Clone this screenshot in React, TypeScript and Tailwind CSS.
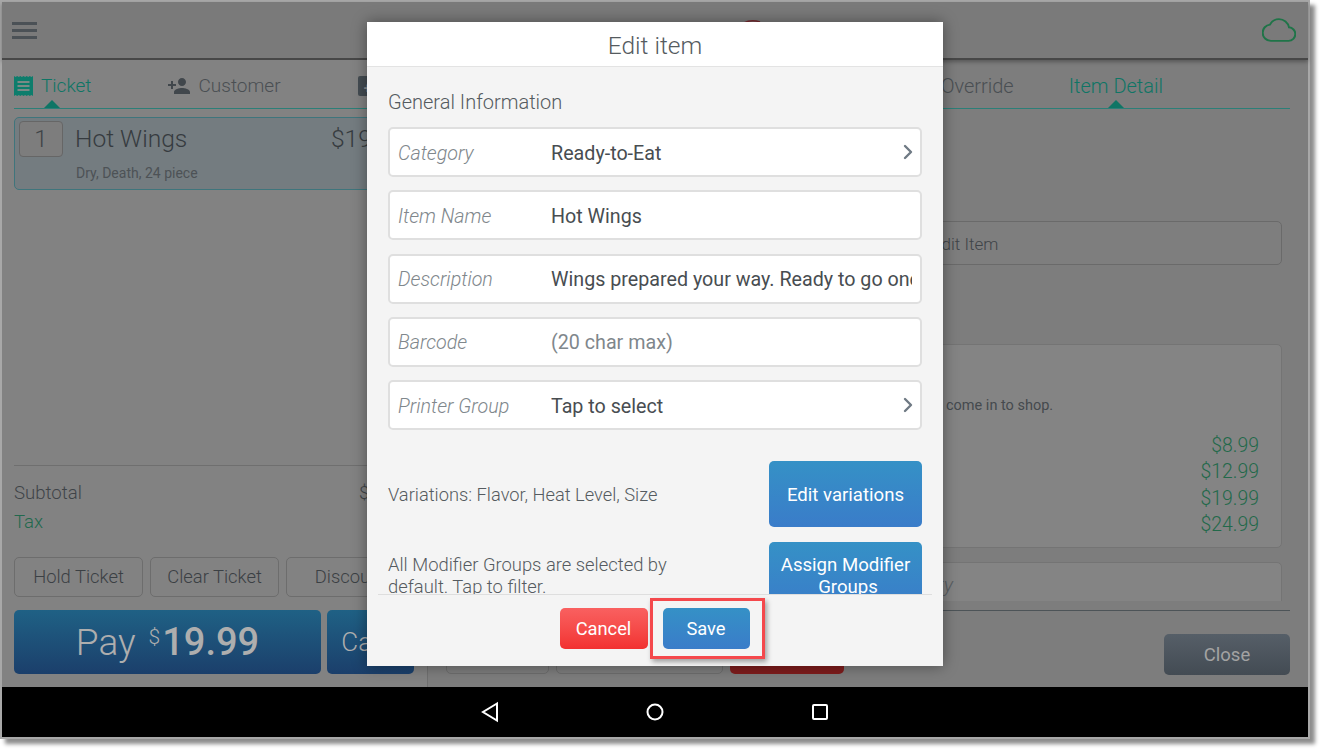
import { ChevronRight } from 'lucide-react';
import { MdPersonAdd } from 'react-icons/md';

const fields = [
    { label: 'Category', value: 'Ready-to-Eat', arrow: true },
    { label: 'Item Name', value: 'Hot Wings' },
    { label: 'Description', value: 'Wings prepared your way. Ready to go one hour before you come in to shop.' },
    { label: 'Barcode', value: '(20 char max)', muted: true },
    { label: 'Printer Group', value: 'Tap to select', arrow: true },
];

const prices = ['$8.99', '$12.99', '$19.99', '$24.99'];

function Caret({ className }: { className: string }) {
    return (
        <svg className={`absolute bottom-0 ${className}`} width="16" height="8" viewBox="0 0 16 8">
            <path d="M0 8 L8 0 L16 8 Z" fill="#0f7565" />
        </svg>
    );
}

function TicketIcon() {
    return (
        <svg width="19" height="20" viewBox="0 0 19 20" className="shrink-0">
            <path
                d="M0 0l1.6 1L3.2 0l1.6 1L6.3 0l1.6 1L9.5 0l1.6 1 1.6-1 1.5 1 1.6-1 1.6 1L19 0v20l-1.6-1-1.6 1-1.6-1-1.5 1-1.6-1-1.6 1-1.6-1-1.6 1-1.5-1-1.6 1-1.6-1L0 20z"
                fill="#0d7d6c"
            />
            <path d="M3.5 5h12v2h-12zM3.5 9h12v2h-12zM3.5 13h12v2h-12z" fill="#7a8a86" />
        </svg>
    );
}

function EditItemModal() {
    return (
        <div className="absolute left-[365px] top-[20px] z-10 flex h-[644px] w-[576px] flex-col bg-[#f4f4f4] shadow-[0_0_14px_rgba(0,0,0,0.4)]">
            <div className="flex h-[45px] shrink-0 items-center justify-center border-b border-[#e3e3e3] bg-white pt-[5px] text-[24.5px] font-light text-[#555b60]">
                Edit item
            </div>
            <div className="mx-[11px] h-[528px] shrink-0 overflow-hidden border-b border-[#dedede] px-[10px]">
                <div className="mt-[23px] text-[20px] leading-[24px] font-light text-[#555b60]">General Information</div>
                <div className="mt-[13px] flex flex-col gap-[13.25px]">
                    {fields.map(f => (
                        <div key={f.label} className={`flex h-[50px] items-center rounded-[5px] border-2 border-[#dfdfdf] bg-white pl-[8px] text-[19.7px] ${f.arrow ? 'pr-0' : 'pr-[8px]'}`}>
                            <span className="mt-[3px] w-[153px] shrink-0 font-light text-[#80878c] italic">{f.label}</span>
                            <span className={`mt-[3px] flex-1 overflow-hidden whitespace-nowrap ${f.muted ? 'text-[#7f878c]' : 'text-[#484d51]'}`}>{f.value}</span>
                            {f.arrow && <ChevronRight className="shrink-0 text-[#6f7a84]" size={24} strokeWidth={2.4} />}
                        </div>
                    ))}
                </div>
                <div className="mt-[31px] flex items-center justify-between">
                    <span className="pt-[2px] text-[18.3px] font-light text-[#555b60]">Variations: Flavor, Heat Level, Size</span>
                    <button className="h-[66px] w-[153px] rounded-[5px] bg-gradient-to-b from-[#3591c6] to-[#3a7cc9] pt-[3px] text-[18.6px] text-white">
                        Edit variations
                    </button>
                </div>
                <div className="mt-[15px] flex items-start justify-between">
                    <span className="mt-[12px] w-[300px] text-[18.4px] leading-[22px] font-light text-[#555b60]">
                        All Modifier Groups are selected by default. Tap to filter.
                    </span>
                    <button className="h-[66px] w-[153px] rounded-[5px] bg-gradient-to-b from-[#3591c6] to-[#3a7cc9] pt-[2px] text-[18.6px] leading-[22px] text-white">
                        Assign Modifier<br /><span className="pl-[5px]">Groups</span>
                    </button>
                </div>
            </div>
            <div className="relative flex flex-1 justify-center gap-[15px] pt-[13px] pr-[1px]">
                <button className="h-[41px] w-[88px] rounded-[5px] bg-gradient-to-b from-[#f96060] to-[#f23030] text-[18.3px] text-white">Cancel</button>
                <button className="h-[41px] w-[87px] rounded-[5px] bg-gradient-to-b from-[#3591c6] to-[#3a7cc9] text-[18.3px] text-white">Save</button>
                {/* annotation box round the Save button */}
                <div className="absolute top-[3px] left-[283px] h-[61px] w-[115px] border-[3px] border-[#f4484c] shadow-[2px_3px_5px_rgba(0,0,0,0.35)]" />
            </div>
        </div>
    );
}

export default function App() {
    return (
        <div className="h-[753px] w-[1325px] overflow-hidden bg-white font-['Roboto',sans-serif]">
            <div className="h-[739px] w-[1310px] border-2 border-[#a8a8a8] shadow-[5px_5px_4px_rgba(0,0,0,0.45)]">
                <div className="relative flex h-[735px] w-[1306px] flex-col bg-[#7d7d7d]">
                    {/* top bar */}
                    <div className="flex h-[58px] shrink-0 items-center justify-between border-b-2 border-[#474747] bg-[#7a7a7a] pr-[12px] pl-[10px] shadow-[0_2px_4px_rgba(0,0,0,0.3)]">
                        <div className="flex flex-col gap-[4px]">
                            <div className="h-[3px] w-[25px] bg-[#4b5156]" />
                            <div className="h-[3px] w-[25px] bg-[#4b5156]" />
                            <div className="h-[3px] w-[25px] bg-[#4b5156]" />
                        </div>
                        <svg width="34" height="24" viewBox="-0.5 3.4 25 17.2" fill="none" stroke="#1f7448" strokeWidth="1.45">
                            <path d="M19.35 10.04C18.67 6.59 15.64 4 12 4 9.11 4 6.6 5.64 5.35 8.04 2.34 8.36 0 10.91 0 14c0 3.31 2.69 6 6 6h13c2.76 0 5-2.24 5-5 0-2.64-2.05-4.78-4.65-4.96z" />
                        </svg>
                    </div>

                    <div className="flex min-h-0 flex-1">
                        {/* ticket column */}
                        <div className="flex w-[426px] shrink-0 flex-col border-r border-[#6f6f6f] bg-[#828282] pr-[12px] pl-[12px]">
                            <div className="relative flex h-[49px] shrink-0 items-center border-b border-[#2c7f78] pt-[3px] text-[19px] font-light">
                                <TicketIcon />
                                <span className="mt-[2px] ml-[8px] text-[#0f7565]">Ticket</span>
                                <MdPersonAdd className="ml-[76px] shrink-0 text-[#41474c]" size={24} />
                                <span className="mt-[2px] ml-[7px] text-[#4a4f53]">Customer</span>
                                <div className="ml-[77px] flex h-[20px] w-[20px] shrink-0 items-end justify-center rounded-[2px] bg-[#444c52] text-[14px] leading-[16px] font-bold text-[#8a8f92]">+</div>
                                <Caret className="left-[30px]" />
                            </div>
                            <div className="mt-[8px] flex h-[73px] shrink-0 items-start rounded-[5px] border border-[#3f757c] bg-[#747c80] pr-[9px] pl-[4px] pt-[3px]">
                                <div className="flex h-[36px] w-[44px] shrink-0 items-center justify-center rounded-[4px] border border-[#666] bg-[#7d7d7d] text-[24px] font-light text-[#3f4448]">1</div>
                                <div className="ml-[12px] flex-1">
                                    <div className="flex justify-between text-[24.6px] leading-[36px] font-light text-[#363b3f]">
                                        <span>Hot Wings</span>
                                        <span>$19.99</span>
                                    </div>
                                    <div className="mt-[7px] ml-[1px] text-[14px] leading-[18px] text-[#4d5256]">Dry, Death, 24 piece</div>
                                </div>
                            </div>
                            <div className="mt-auto border-t border-[#6f6f6f] pb-[13px]">
                                <div className="mt-[15px] flex justify-between text-[18.6px] leading-[24px] font-light text-[#3f4448]">
                                    <span>Subtotal</span>
                                    <span>$19.99</span>
                                </div>
                                <div className="mt-[5px] text-[18.6px] leading-[24px] font-light text-[#22694e]">Tax</div>
                                <div className="mt-[23px] flex gap-[7px]">
                                    {['Hold Ticket', 'Clear Ticket', 'Discount'].map(b => (
                                        <div key={b} className="flex h-[40px] w-[129px] items-center justify-center rounded-[5px] border border-[#6d6d6d] text-[18.4px] font-light text-[#3b4044]">
                                            {b}
                                        </div>
                                    ))}
                                </div>
                                <div className="mt-[13px] flex gap-[6px]">
                                    <div className="flex h-[64px] w-[307px] items-baseline justify-center rounded-[5px] bg-gradient-to-b from-[#1f6185] to-[#1b3f6b] pt-[4px] text-[#aeaeae]">
                                        <span className="text-[37px] font-light">Pay</span>
                                        <span className="mr-[2px] ml-[13px] -translate-y-[11px] text-[21px] font-light">$</span>
                                        <span className="text-[38px] font-medium">19.99</span>
                                    </div>
                                    <div className="flex h-[64px] w-[87px] items-center justify-center rounded-[5px] bg-gradient-to-b from-[#1f6185] to-[#1b3f6b] text-[26px] font-light text-[#aeaeae]">
                                        Cash
                                    </div>
                                </div>
                            </div>
                        </div>

                        {/* item detail column */}
                        <div className="flex min-w-0 flex-1 flex-col pr-[18px] pl-[13px]">
                            <div className="relative flex h-[49px] shrink-0 items-center justify-end border-b border-[#2c7f78] pt-[3px] pr-[127px] text-[20px] font-light">
                                <span className="text-[#4a4f53]">Price Override</span>
                                <span className="ml-[55px] text-[#0f7565]">Item Detail</span>
                                <Caret className="right-[166px]" />
                            </div>
                            <div className="mr-[8px] h-[492px] shrink-0 overflow-hidden">
                                <div className="mt-[112px] flex h-[44px] items-center rounded-[5px] border border-[#6a6a6a] bg-[#7e7e7e] pt-[3px] pl-[490px] text-[17px] font-light text-[#3f4448]">
                                    Edit Item
                                </div>
                                <div className="mt-[79px] h-[204px] rounded-[5px] border border-[#747474] bg-[#848484] pt-[52px] pr-[22px]">
                                    <div className="pl-[124px] text-[14.5px] leading-[18px] whitespace-nowrap text-[#454a4e]">
                                        Wings prepared your way. Ready to go one hour before you come in to shop.
                                    </div>
                                    <div className="mt-[18px] flex flex-col items-end text-[19.4px] leading-[26.4px] font-light text-[#22694a]">
                                        {prices.map(p => <span key={p}>{p}</span>)}
                                    </div>
                                </div>
                                <div className="mt-[14px] h-[60px] rounded-[5px] border border-[#747474] bg-[#848484] pt-[7px] pl-[440px] text-[20px] font-light text-[#5a5f63] italic">
                                    Quantity
                                </div>
                            </div>
                            <div className="mt-[9px] flex flex-1 items-start justify-between border-t border-[#4d5458] pt-[23px]">
                                <div className="flex gap-[7px] pl-[5px]">
                                    <div className="h-[40px] w-[103px] rounded-[5px] border border-[#6d6d6d]" />
                                    <div className="h-[40px] w-[167px] rounded-[5px] border border-[#6d6d6d]" />
                                    <div className="h-[40px] w-[114px] rounded-[5px] bg-[#7f1c1c]" />
                                </div>
                                <div className="flex h-[41px] w-[126px] items-center justify-center rounded-[5px] bg-gradient-to-b from-[#565f68] to-[#434b53] pt-[3px] text-[18.5px] text-[#a3a3a3]">
                                    Close
                                </div>
                            </div>
                        </div>
                    </div>

                    {/* android nav bar */}
                    <div className="flex h-[50px] shrink-0 items-center justify-center gap-[137px] bg-black pr-[1px]">
                        <svg width="28" height="22" viewBox="0 0 28 22" fill="none" stroke="white" strokeWidth="2">
                            <path d="M21 2.5 L7 11 L21 19.5 Z" />
                        </svg>
                        <svg width="28" height="22" viewBox="0 0 28 22" fill="none" stroke="white" strokeWidth="2">
                            <circle cx="14" cy="11" r="7.5" />
                        </svg>
                        <svg width="28" height="22" viewBox="0 0 28 22" fill="none" stroke="white" strokeWidth="2">
                            <rect x="7" y="4" width="14" height="14" rx="1" />
                        </svg>
                    </div>

                    {/* tip of the logo, mostly hidden by the modal */}
                    <svg className="absolute top-[16px] left-[741px]" width="18" height="6" viewBox="0 0 18 6" fill="none">
                        <path d="M1 5 Q8 1 17 4" stroke="#7a2a30" strokeWidth="1.5" />
                    </svg>

                    <EditItemModal />
                </div>
            </div>
        </div>
    );
}
